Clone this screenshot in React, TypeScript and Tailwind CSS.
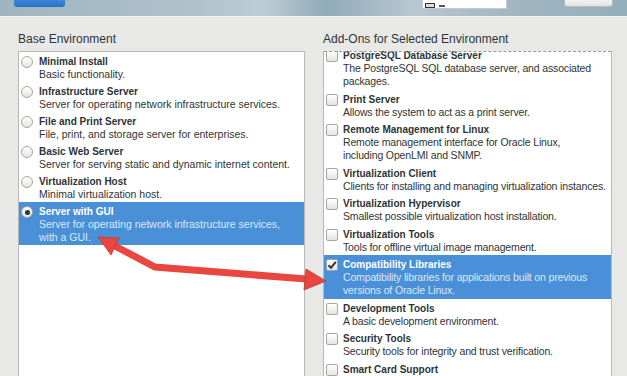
import React from "react";

type Item = {
  title: string;
  lines: string[];
  selected?: boolean;
};

const baseEnvs: Item[] = [
  { title: "Minimal Install", lines: ["Basic functionality."] },
  { title: "Infrastructure Server", lines: ["Server for operating network infrastructure services."] },
  { title: "File and Print Server", lines: ["File, print, and storage server for enterprises."] },
  { title: "Basic Web Server", lines: ["Server for serving static and dynamic internet content."] },
  { title: "Virtualization Host", lines: ["Minimal virtualization host."] },
  {
    title: "Server with GUI",
    lines: ["Server for operating network infrastructure services,", "with a GUI."],
    selected: true,
  },
];

const addOns: Item[] = [
  { title: "PostgreSQL Database Server", lines: ["The PostgreSQL SQL database server, and associated", "packages."] },
  { title: "Print Server", lines: ["Allows the system to act as a print server."] },
  { title: "Remote Management for Linux", lines: ["Remote management interface for Oracle Linux,", "including OpenLMI and SNMP."] },
  { title: "Virtualization Client", lines: ["Clients for installing and managing virtualization instances."] },
  { title: "Virtualization Hypervisor", lines: ["Smallest possible virtualization host installation."] },
  { title: "Virtualization Tools", lines: ["Tools for offline virtual image management."] },
  {
    title: "Compatibility Libraries",
    lines: ["Compatibility libraries for applications built on previous", "versions of Oracle Linux."],
    selected: true,
  },
  { title: "Development Tools", lines: ["A basic development environment."] },
  { title: "Security Tools", lines: ["Security tools for integrity and trust verification."] },
  { title: "Smart Card Support", lines: ["Support for using smart card authentication."] },
];

const Radio = ({ checked }: { checked?: boolean }) => (
  <div className="mt-[1px] flex h-[12px] w-[12px] shrink-0 items-center justify-center rounded-full border border-[#a5a7a4] bg-gradient-to-b from-[#ffffff] to-[#e4e4e2]">
    {checked && <div className="h-[5px] w-[5px] rounded-full bg-[#2e3436]" />}
  </div>
);

const Check = ({ checked }: { checked?: boolean }) => (
  <div className="mt-[1px] flex h-[12px] w-[12px] shrink-0 items-center justify-center rounded-[2px] border border-[#a5a7a4] bg-gradient-to-b from-[#ffffff] to-[#e4e4e2]">
    {checked && (
      <svg width="10" height="10" viewBox="0 0 10 10">
        <path d="M1.5 5.2 L4 7.8 L8.8 1.8" fill="none" stroke="#2e3436" strokeWidth="2" />
      </svg>
    )}
  </div>
);

const Row = ({ item, kind }: { item: Item; kind: "radio" | "check" }) => {
  const isCheck = kind === "check";
  return (
    <div
      className={`flex pl-[2px] ${isCheck ? "gap-[5px] pt-[3px] pb-[1.25px]" : "gap-[6px] pt-[3px] pb-[1px]"} ${
        item.selected ? "bg-[#4a90d9]" : ""
      }`}
    >
      {isCheck ? <Check checked={item.selected} /> : <Radio checked={item.selected} />}
      <div className="whitespace-nowrap">
        <div
          className={`text-[10px] font-bold leading-[13px] ${
            item.selected ? "text-white" : "text-[#2e3436]"
          }`}
        >
          {item.title}
        </div>
        {item.lines.map((l) => (
          <div
            key={l}
            className={`text-[10.5px] ${isCheck ? "leading-[13.2px] tracking-[-0.15px]" : "leading-[13px]"} ${
              item.selected ? "text-[#dce9f7]" : "text-[#2e3436]"
            }`}
          >
            {l}
          </div>
        ))}
      </div>
    </div>
  );
};

const Arrow = () => (
  <svg
    className="pointer-events-none absolute left-0 top-0"
    width="627"
    height="376"
    viewBox="0 0 627 376"
  >
    <g fill="#e8463f" stroke="#c23a34" strokeWidth="0.8">
      <polyline
        points="113,245 155,267 306,279"
        fill="none"
        stroke="#e8463f"
        strokeWidth="7"
        strokeLinejoin="miter"
      />
      <polygon points="98,237 119,238 111,255" />
      <polygon points="326,281 306,269 304,290" />
    </g>
  </svg>
);

export default function App() {
  return (
    <div
      className="relative flex h-[376px] w-[627px] flex-col overflow-hidden bg-[#e8e8e7] text-[#2e3436]"
      style={{ fontFamily: '"Liberation Sans", Arial, sans-serif' }}
    >
      {/* top bar */}
      <div className="relative h-[17px] shrink-0 border-b border-[#f4f4f3] bg-[linear-gradient(90deg,#9fb5c1_0%,#aec1cb_30%,#bccdd5_42%,#8fabb9_52%,#b7c8d1_66%,#a2b8c3_80%,#93aebc_100%)]">
        <div className="absolute left-[14px] top-0 h-[7px] w-[51px] rounded-b-[3px] bg-gradient-to-b from-[#3f86dc] to-[#2f6fc4]" />
        <div className="absolute left-[422px] top-0 flex h-[9px] w-[85px] items-end gap-[4px] border border-t-0 border-[#c9c9c9] bg-white px-[2px]">
          <div className="h-[5px] w-[10px] border border-[#333] bg-[#ddd]" />
          <div className="mb-[1px] h-[2px] w-[6px] bg-[#555]" />
        </div>
        <div className="absolute left-[564px] top-0 h-[7px] w-[49px] rounded-b-[3px] border border-t-0 border-[#b9b9b9] bg-gradient-to-b from-[#f2f2f2] to-[#e2e2e2]" />
      </div>

      <div className="flex min-h-0 flex-1 gap-[18px] pl-[18px]">
        {/* base environment */}
        <div className="flex w-[287px] flex-col">
          <div className="pt-[15px] pb-[4px] text-[12px] leading-[15px]">Base Environment</div>
          <div className="flex-1 overflow-hidden border border-b-0 border-[#b7b9b5] bg-white">
            {baseEnvs.map((it) => (
              <Row key={it.title} item={it} kind="radio" />
            ))}
          </div>
        </div>

        {/* add-ons */}
        <div className="flex w-[289px] flex-col">
          <div className="pt-[15px] pb-[4px] text-[12px] leading-[15px]">Add-Ons for Selected Environment</div>
          <div className="relative flex-1 overflow-hidden border border-b-0 border-t-0 border-[#b7b9b5] bg-white">
            <div className="-mt-[5px]">
              {addOns.map((it) => (
                <Row key={it.title} item={it} kind="check" />
              ))}
            </div>
            <div className="absolute left-0 right-0 top-0 border-t border-dashed border-[#9a9c98]" />
          </div>
        </div>
      </div>

      <Arrow />
    </div>
  );
}
